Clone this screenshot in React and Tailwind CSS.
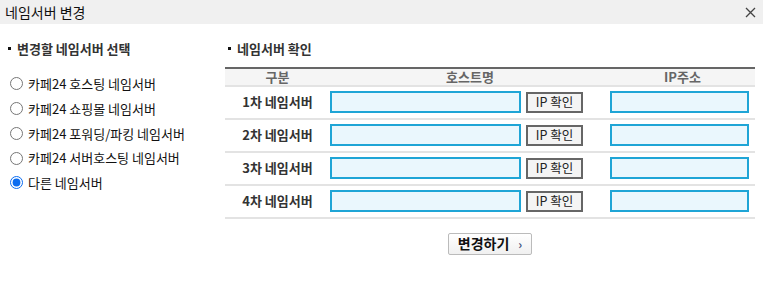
import React from "react";

const font = { fontFamily: '"Noto Sans CJK KR", "Noto Sans", sans-serif' };

const options = [
  "카페24 호스팅 네임서버",
  "카페24 쇼핑몰 네임서버",
  "카페24 포워딩/파킹 네임서버",
  "카페24 서버호스팅 네임서버",
  "다른 네임서버",
];

function Row({ label }) {
  return (
    <div className="flex items-center h-[33px] border-b-2 border-[#e3e3e3]">
      <div className="w-[105px] text-center font-bold text-[13px] text-[#333]">{label}</div>
      <div className="w-[191px] h-[22px] border-2 border-[#1fa5d6] bg-[#eaf7fd]"></div>
      <button className="ml-[5px] w-[57px] h-[21px] border-2 border-[#666] bg-[#f4f4f4] text-[12.5px] text-[#222] leading-none">IP 확인</button>
      <div className="w-[27px]"></div>
      <div className="w-[139px] h-[22px] border-2 border-[#1fa5d6] bg-[#eaf7fd]"></div>
    </div>
  );
}

export default function App() {
  return (
    <div className="w-[763px] h-[289px] bg-white text-[#222]" style={font}>
      <div className="h-[24px] bg-[#f0f0f0] flex items-center justify-between pl-[5px] pr-[7px]">
        <span className="text-[14px] text-[#111]">네임서버 변경</span>
        <svg width="11" height="11" viewBox="0 0 11 11" className="mr-[0px]">
          <path d="M1 1 L10 10 M10 1 L1 10" stroke="#444" strokeWidth="1.3" fill="none" />
        </svg>
      </div>
      <div className="flex">
        <div className="w-[225px] pl-[8px] pt-[15px]">
          <div className="text-[13px] font-bold text-[#333] flex items-center">
            <span className="inline-block w-[3px] h-[3px] bg-[#111] mr-[6px]"></span>
            변경할 네임서버 선택
          </div>
          <div className="mt-[13px] flex flex-col">
            {options.map((o, i) => (
              <label key={o} className="flex items-center h-[24.75px] text-[13px] text-[#111]">
                <input
                  type="radio"
                  name="ns"
                  defaultChecked={i === 4}
                  className="w-[13px] h-[13px] m-0 mr-[5px] ml-[2px] accent-[#0a6cf0]"
                />
                {o}
              </label>
            ))}
          </div>
        </div>
        <div className="w-[530px] pt-[15px]">
          <div className="text-[13px] font-bold text-[#333] flex items-center pl-[3px]">
            <span className="inline-block w-[3px] h-[3px] bg-[#111] mr-[6px]"></span>
            네임서버 확인
          </div>
          <div className="mt-[8px] border-t-2 border-[#666]">
            <div className="flex items-center h-[18px] bg-[#f5f5f5] border-b-2 border-[#e3e3e3] text-[13px] font-bold text-[#666]">
              <div className="w-[105px] text-center">구분</div>
              <div className="w-[280px] text-center">호스트명</div>
              <div className="flex-1 text-center">IP주소</div>
            </div>
            {["1차 네임서버", "2차 네임서버", "3차 네임서버", "4차 네임서버"].map((l) => (
              <Row key={l} label={l} />
            ))}
          </div>
          <div className="flex justify-center mt-[14px]">
            <button className="w-[84px] h-[22px] border border-[#bbb] rounded-[2px] bg-gradient-to-b from-white to-[#f0f0f0] flex items-center justify-center text-[14px] font-bold text-[#111]">
              변경하기
              <span className="ml-[9px] text-[12px] font-bold text-[#3b4f7a] leading-none">›</span>
            </button>
          </div>
        </div>
      </div>
    </div>
  );
}
